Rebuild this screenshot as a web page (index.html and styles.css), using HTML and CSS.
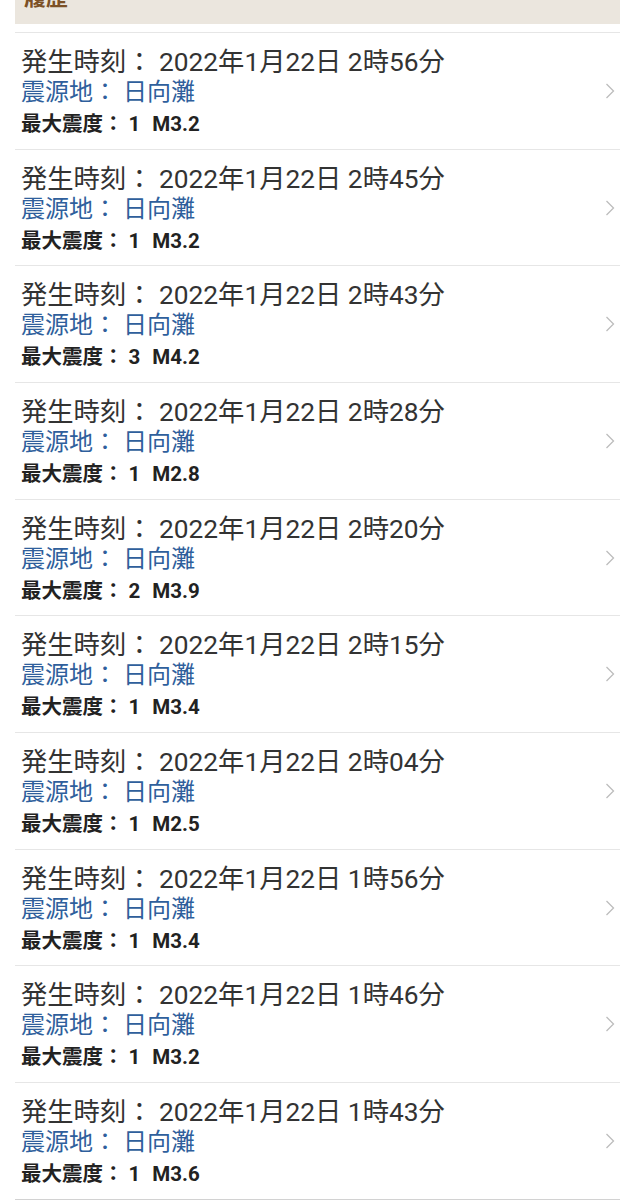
FILE: index.html
```html
<!DOCTYPE html>
<html>
<head>
<meta charset="utf-8">
<meta name="viewport" content="width=device-width, initial-scale=1">
<title>履歴</title>
<link rel="stylesheet" href="styles.css">
</head>
<body>
<div id="page">
	<div class="head"><h2>履歴</h2></div>
	<ul class="quakeList">
		<li><a href="#"><div class="info"><p class="time">発生時刻： 2022年1月22日 2時56分</p><p class="place">震源地： 日向灘</p><p class="level">最大震度： 1<span class="mag">M3.2</span></p></div><svg class="arrow" viewBox="0 0 10 16"><polyline points="1.5,1 8.5,8 1.5,15"/></svg></a></li>
		<li><a href="#"><div class="info"><p class="time">発生時刻： 2022年1月22日 2時45分</p><p class="place">震源地： 日向灘</p><p class="level">最大震度： 1<span class="mag">M3.2</span></p></div><svg class="arrow" viewBox="0 0 10 16"><polyline points="1.5,1 8.5,8 1.5,15"/></svg></a></li>
		<li><a href="#"><div class="info"><p class="time">発生時刻： 2022年1月22日 2時43分</p><p class="place">震源地： 日向灘</p><p class="level">最大震度： 3<span class="mag">M4.2</span></p></div><svg class="arrow" viewBox="0 0 10 16"><polyline points="1.5,1 8.5,8 1.5,15"/></svg></a></li>
		<li><a href="#"><div class="info"><p class="time">発生時刻： 2022年1月22日 2時28分</p><p class="place">震源地： 日向灘</p><p class="level">最大震度： 1<span class="mag">M2.8</span></p></div><svg class="arrow" viewBox="0 0 10 16"><polyline points="1.5,1 8.5,8 1.5,15"/></svg></a></li>
		<li><a href="#"><div class="info"><p class="time">発生時刻： 2022年1月22日 2時20分</p><p class="place">震源地： 日向灘</p><p class="level">最大震度： 2<span class="mag">M3.9</span></p></div><svg class="arrow" viewBox="0 0 10 16"><polyline points="1.5,1 8.5,8 1.5,15"/></svg></a></li>
		<li><a href="#"><div class="info"><p class="time">発生時刻： 2022年1月22日 2時15分</p><p class="place">震源地： 日向灘</p><p class="level">最大震度： 1<span class="mag">M3.4</span></p></div><svg class="arrow" viewBox="0 0 10 16"><polyline points="1.5,1 8.5,8 1.5,15"/></svg></a></li>
		<li><a href="#"><div class="info"><p class="time">発生時刻： 2022年1月22日 2時04分</p><p class="place">震源地： 日向灘</p><p class="level">最大震度： 1<span class="mag">M2.5</span></p></div><svg class="arrow" viewBox="0 0 10 16"><polyline points="1.5,1 8.5,8 1.5,15"/></svg></a></li>
		<li><a href="#"><div class="info"><p class="time">発生時刻： 2022年1月22日 1時56分</p><p class="place">震源地： 日向灘</p><p class="level">最大震度： 1<span class="mag">M3.4</span></p></div><svg class="arrow" viewBox="0 0 10 16"><polyline points="1.5,1 8.5,8 1.5,15"/></svg></a></li>
		<li><a href="#"><div class="info"><p class="time">発生時刻： 2022年1月22日 1時46分</p><p class="place">震源地： 日向灘</p><p class="level">最大震度： 1<span class="mag">M3.2</span></p></div><svg class="arrow" viewBox="0 0 10 16"><polyline points="1.5,1 8.5,8 1.5,15"/></svg></a></li>
		<li><a href="#"><div class="info"><p class="time">発生時刻： 2022年1月22日 1時43分</p><p class="place">震源地： 日向灘</p><p class="level">最大震度： 1<span class="mag">M3.6</span></p></div><svg class="arrow" viewBox="0 0 10 16"><polyline points="1.5,1 8.5,8 1.5,15"/></svg></a></li>
	</ul>
</div>
</body>
</html>
```
FILE: styles.css
```css
*{font-family: Roboto, 'Noto Sans CJK JP', sans-serif;}
body{margin:0;background:#fff;}
#page{padding:0 14px 0 15px;}

/*見出し (上が画面外)*/
.head{margin-top:-20px;padding:6px 9px 14px;background:#ebe6de;}
.head h2{margin:0;font-size:22px;line-height:24px;font-weight:bold;color:#7c5126;}

/*履歴リスト*/
.quakeList{margin:8px 0 0;padding:0;list-style:none;border-top:1px solid #e6e6e6;}
.quakeList li{border-bottom:1px solid #e6e6e6;}
.quakeList li:last-child{border-bottom:3px solid #d2d2d2;}
.quakeList a{display:flex;align-items:center;padding:14px 5px 8.67px 6px;text-decoration:none;}
.info{flex:1;}
.info p{margin:0;white-space:nowrap;}
.time{font-size:26.3px;line-height:30px;color:#333;}
.place{font-size:24px;line-height:31px;color:#2f5f9c;}
.level{font-size:20.5px;line-height:32px;font-weight:bold;color:#222;}
.mag{margin-left:12px;}
.arrow{width:10px;height:16px;margin-bottom:5px;fill:none;stroke:#bdbdbd;stroke-width:1.3;}
```
